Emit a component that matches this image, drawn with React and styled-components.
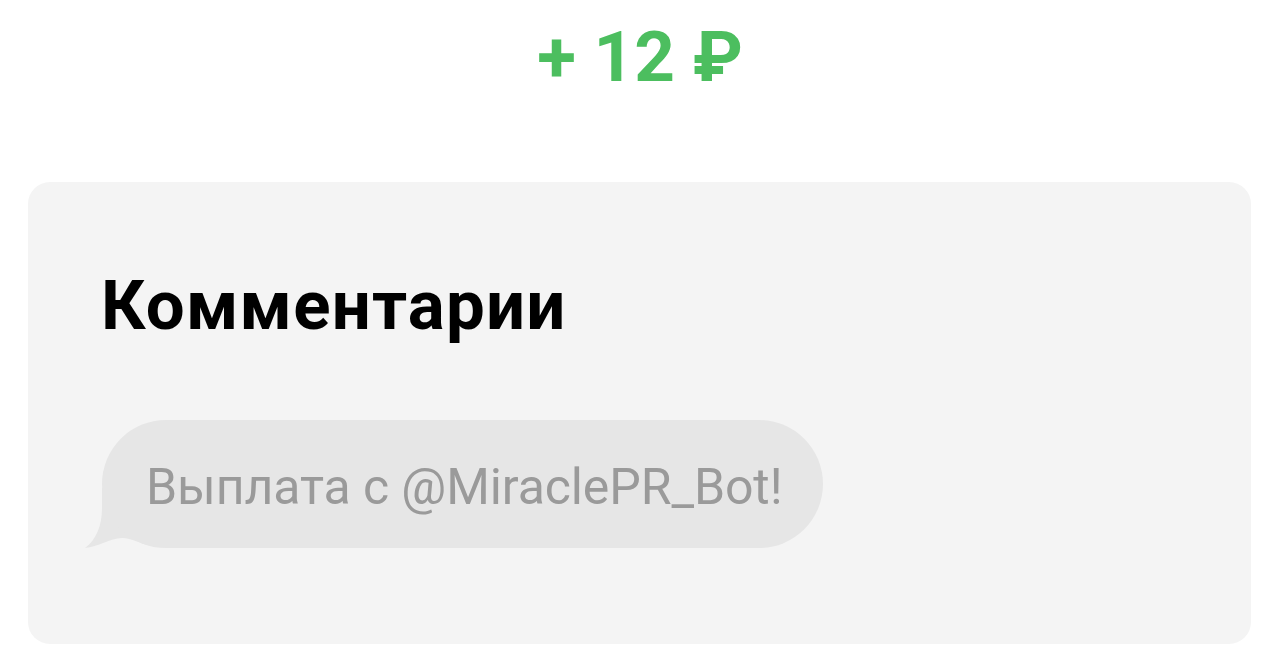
import React from 'react';
import styled, { createGlobalStyle } from 'styled-components';

const GlobalStyle = createGlobalStyle`
  html, body {
    margin: 0;
    padding: 0;
    background: #fff;
    font-family: Roboto, "Noto Sans", sans-serif;
  }
`;

const Page = styled.div`
  width: 1280px;
  height: 645px;
  overflow: hidden;
  display: flex;
  flex-direction: column;
  align-items: center;
`;

const Amount = styled.div`
  margin-top: 15px;
  height: 84px;
  line-height: 84px;
  font-size: 71px;
  font-weight: 700;
  color: #4cbe5f;
  white-space: nowrap;
`;

const Card = styled.div`
  margin-top: 83px;
  align-self: stretch;
  margin-left: 28px;
  margin-right: 29px;
  height: 462px;
  background: #f4f4f4;
  border-radius: 22px;
  padding: 0 0 0 74px;
  box-sizing: border-box;
`;

const Title = styled.h2`
  margin: 84px 0 0 -1px;
  font-size: 69px;
  line-height: 80px;
  letter-spacing: 1.2px;
  font-weight: 700;
  color: #000;
`;

const BubbleRow = styled.div`
  margin-top: 74px;
  position: relative;
  display: inline-block;
`;

const Bubble = styled.div`
  position: relative;
  height: 128px;
  box-sizing: border-box;
  padding: 6px 41px 0 44px;
  display: flex;
  align-items: center;
  background: #e6e6e6;
  border-radius: 64px;
  font-size: 50px;
  letter-spacing: -0.1px;
  color: #9a9a9a;
  white-space: nowrap;
`;

const Tail = styled.svg`
  position: absolute;
  left: -18px;
  bottom: 0;
`;

export default function App() {
  return (
    <>
      <GlobalStyle />
      <Page>
        <Amount>+ 12 ₽</Amount>
        <Card>
          <Title>Комментарии</Title>
          <BubbleRow>
            <Tail width="70" height="60" viewBox="0 0 70 60">
              <path
                d="M18 0 L18 20 C18 38 12 52 1 60 C14 59 26 50 38 50 C48 50 56 56 68 58 L68 0 Z"
                fill="#e6e6e6"
              />
            </Tail>
            <Bubble>Выплата с @MiraclePR_Bot!</Bubble>
          </BubbleRow>
        </Card>
      </Page>
    </>
  );
}
